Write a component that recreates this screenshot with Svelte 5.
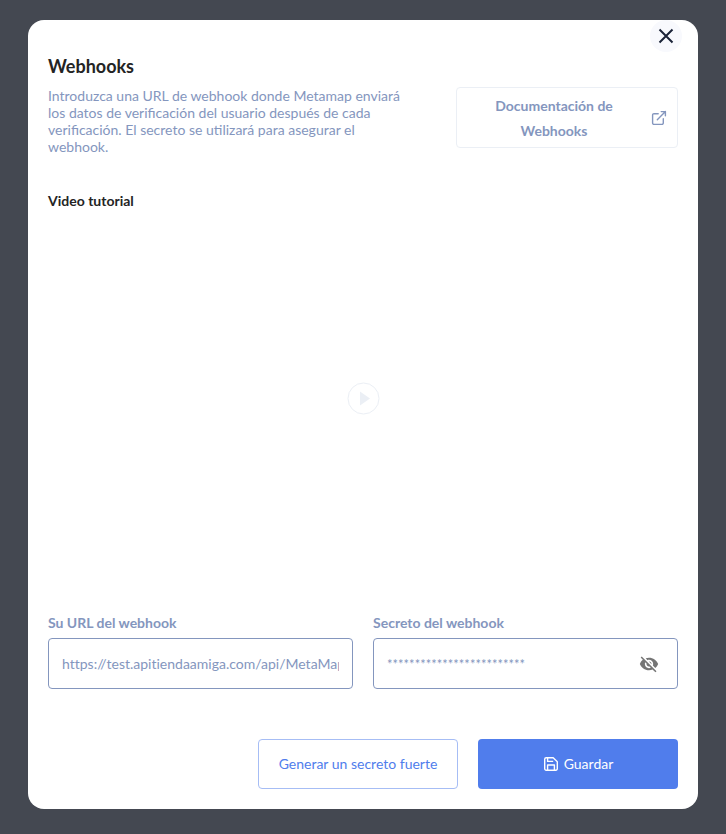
<script>
  let url = $state('https://test.apitiendaamiga.com/api/MetaMap/webhook');
  let secret = $state('*'.repeat(25));
</script>

<div class="backdrop">
  <div class="dialog" role="dialog" aria-modal="true" aria-labelledby="title">
    <button class="close" type="button" aria-label="Cerrar">
      <svg width="16" height="16" viewBox="0 0 16 16" fill="none" stroke="#1b2338" stroke-width="2">
        <path d="M1.5 1.5l13 13M14.5 1.5l-13 13" />
      </svg>
    </button>

    <header>
      <div class="intro">
        <h1 id="title">Webhooks</h1>
        <p>
          Introduzca una URL de webhook donde Metamap enviará los datos de verificación del usuario
          después de cada verificación. El secreto se utilizará para asegurar el webhook.
        </p>
      </div>
      <a class="docs" href="#docs">
        <span>Documentación de Webhooks</span>
        <svg width="16" height="16" viewBox="0 0 16 16" fill="none" stroke="currentColor" stroke-width="1.4" stroke-linecap="round" stroke-linejoin="round">
          <path d="M12.3 8.8v4.2a1.4 1.4 0 0 1-1.4 1.4H3a1.4 1.4 0 0 1-1.4-1.4V5.1A1.4 1.4 0 0 1 3 3.7h4.2M10.2 1.6h4.2v4.2M6.3 9.7l8.1-8.1" />
        </svg>
      </a>
    </header>

    <section>
      <h2>Video tutorial</h2>
      <div class="video">
        <button class="play" type="button" aria-label="Reproducir">
          <svg width="33" height="33" viewBox="0 0 33 33">
            <circle cx="16.5" cy="16.5" r="15.5" fill="none" stroke="#ebeff5" />
            <path d="M13 9.5v14l10-7z" fill="#ebeff5" />
          </svg>
        </button>
      </div>
    </section>

    <form onsubmit={(e) => e.preventDefault()}>
      <div class="fields">
        <div class="field">
          <label for="url">Su URL del webhook</label>
          <div class="box"><input id="url" type="text" bind:value={url} /></div>
        </div>
        <div class="field">
          <label for="secret">Secreto del webhook</label>
          <div class="box">
            <input id="secret" class="masked" type="text" bind:value={secret} />
            <button class="eye" type="button" aria-label="Mostrar secreto">
              <svg width="20" height="20" viewBox="0 0 24 24" fill="#757575">
                <path d="M12 7c2.76 0 5 2.24 5 5 0 .65-.13 1.26-.36 1.83l2.92 2.92c1.51-1.26 2.7-2.89 3.43-4.75-1.73-4.39-6-7.5-11-7.5-1.4 0-2.74.25-3.98.7l2.16 2.16C10.74 7.13 11.35 7 12 7zM2 4.27l2.28 2.28.46.46C3.08 8.3 1.78 10.02 1 12c1.73 4.39 6 7.5 11 7.5 1.55 0 3.03-.3 4.38-.84l.42.42L19.73 22 21 20.73 3.27 3 2 4.27zM7.53 9.8l1.55 1.55c-.05.21-.08.43-.08.65 0 1.66 1.34 3 3 3 .22 0 .44-.03.65-.08l1.55 1.55c-.67.33-1.41.53-2.2.53-2.76 0-5-2.24-5-5 0-.79.2-1.53.53-2.2zm4.31-.78l3.15 3.15.02-.16c0-1.66-1.34-3-3-3l-.17.01z" />
              </svg>
            </button>
          </div>
        </div>
      </div>

      <div class="actions">
        <button class="action outline" type="button">Generar un secreto fuerte</button>
        <button class="action solid" type="submit">
          <svg width="16" height="16" viewBox="0 0 16 16" fill="none" stroke="currentColor" stroke-width="1.4" stroke-linejoin="round">
            <path d="M3.2 1.7h7l4.1 4.1v7a1.5 1.5 0 0 1-1.5 1.5H3.2a1.5 1.5 0 0 1-1.5-1.5V3.2a1.5 1.5 0 0 1 1.5-1.5zM4.6 1.7v3.7h5.6M4.6 14.3V9h6.8v5.3" />
          </svg>
          Guardar
        </button>
      </div>
    </form>
  </div>
</div>

<style>
  :global(body) {
    margin: 0;
    background: #444851;
  }
  .backdrop {
    box-sizing: border-box;
    padding: 20px 28px 25px;
    font: 14px/17px Lato, sans-serif;
    color: #8496be;
  }
  .dialog {
    position: relative;
    padding: 35px 20px 20px;
    border-radius: 16px;
    background: #fff;
  }
  button {
    padding: 0;
    border: 0;
    background: none;
    font: inherit;
    cursor: pointer;
  }
  svg {
    display: block;
    flex: none;
  }
  .close {
    position: absolute;
    top: 0;
    right: 16px;
    display: grid;
    place-items: center;
    width: 32px;
    height: 32px;
    border-radius: 50%;
    background: #f8f9fd;
  }
  header {
    display: flex;
    align-items: flex-end;
    justify-content: space-between;
    gap: 40px;
  }
  .intro {
    flex: 1;
    max-width: 356px;
  }
  h1 {
    margin: 0 0 10px;
    font-size: 18px;
    line-height: 22px;
    font-weight: 700;
    color: #242424;
  }
  p {
    margin: 0;
  }
  .docs {
    box-sizing: border-box;
    display: flex;
    align-items: center;
    width: 222px;
    min-height: 61px;
    margin-bottom: 7px;
    padding-right: 10px;
    border: 1px solid #ebeff5;
    border-radius: 4px;
    color: inherit;
    font-weight: 700;
    line-height: 25px;
    text-align: center;
    text-decoration: none;
  }
  .docs span {
    flex: 1;
    padding: 0 20px;
  }
  section {
    margin-top: 37px;
  }
  h2 {
    margin: 0 0 12px;
    font-size: 14px;
    line-height: 17px;
    font-weight: 700;
    color: #242424;
  }
  .video {
    display: grid;
    place-items: center;
    aspect-ratio: 16 / 9;
  }
  form {
    margin-top: 39px;
  }
  .fields {
    display: grid;
    grid-template-columns: 1fr 1fr;
    gap: 20px;
  }
  label {
    display: block;
    margin-bottom: 7px;
    font-weight: 700;
  }
  .box {
    box-sizing: border-box;
    display: flex;
    align-items: center;
    height: 51px;
    padding: 0 13px;
    border: 1px solid #8496be;
    border-radius: 4px;
  }
  .box input {
    flex: 1;
    min-width: 0;
    height: 24px;
    padding: 0;
    border: 0;
    outline: 0;
    background: none;
    font: inherit;
    font-variant-ligatures: none;
    color: inherit;
  }
  .box .masked {
    font-size: 13px;
  }
  .eye {
    padding: 5px;
  }
  .actions {
    display: flex;
    justify-content: flex-end;
    gap: 20px;
    margin-top: 50px;
  }
  .action {
    display: flex;
    align-items: center;
    justify-content: center;
    gap: 5px;
    width: 200px;
    height: 50px;
    padding-bottom: 1px;
    border-radius: 4px;
  }
  .outline {
    border: 1px solid #a6bdf5;
    color: #507dec;
  }
  .solid {
    background: #507dec;
    color: #fff;
  }
</style>
